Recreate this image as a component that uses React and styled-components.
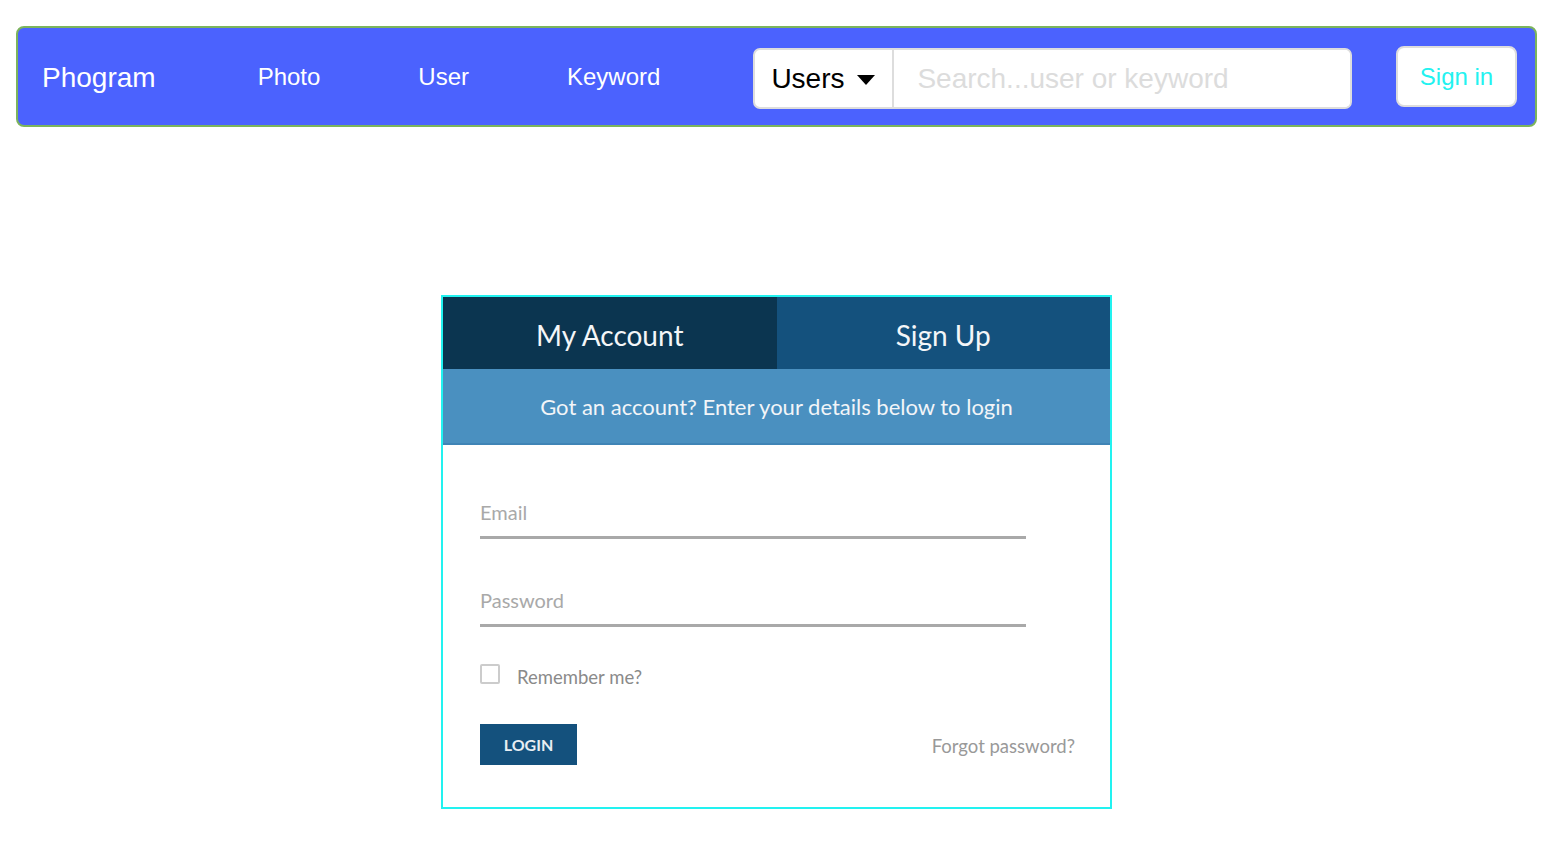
import React, {useState} from 'react';
import styled, {createGlobalStyle} from 'styled-components';

const navBlue = "#4b62fe";
const navBorder = "#7cb45c";
const cyan = "#22f2f0";
const tabDark = "#0b3550";
const tabLight = "#14517d";
const banner = "#4a90c0";
const fieldGrey = "#a9a9a9";

const GlobalStyle = createGlobalStyle`
  body {
    margin: 0;
    background: #ffffff;
    font-family: "Liberation Sans", Arial, sans-serif;
  }
  * {
    box-sizing: border-box;
  }
`;

const Page = styled.div`
  padding: 26px 23px 40px 16px;
`;

const Navbar = styled.nav`
  height: 101px;
  display: flex;
  align-items: center;
  padding: 0 18px 0 24px;
  background-color: ${navBlue};
  border: 2px solid ${navBorder};
  border-radius: 8px;
`;

const Brand = styled.a`
  font-size: 28px;
  color: #ffffff;
  text-decoration: none;
  margin-right: 102px;
  margin-top: 2px;
`;

const NavLinks = styled.div`
  display: flex;
  gap: 98px;
`;

const NavLink = styled.a`
  font-size: 24px;
  color: #ffffff;
  text-decoration: none;
`;

const SearchGroup = styled.div`
  display: flex;
  width: 599px;
  height: 61px;
  margin-left: 93px;
  margin-top: 4px;
  background: #ffffff;
  border: 2px solid #dddddd;
  border-radius: 7px;
  overflow: hidden;
`;

const SelectBox = styled.div`
  width: 139px;
  display: flex;
  align-items: center;
  gap: 12px;
  padding-left: 16px;
  border-right: 2px solid #dddddd;
  font-size: 28px;
  color: #000000;
`;

const Caret = styled.span`
  width: 0;
  height: 0;
  border-left: 9px solid transparent;
  border-right: 9px solid transparent;
  border-top: 10px solid #000000;
  margin-top: 2px;
`;

const SearchInput = styled.input`
  flex: 1;
  border: none;
  outline: none;
  padding: 0 0 0 23px;
  font-family: "Liberation Sans", Arial, sans-serif;
  font-size: 28px;
  color: #333333;
  &::placeholder {
    color: #dcdcdc;
  }
`;

const SignInButton = styled.button`
  width: 121px;
  height: 61px;
  margin-left: auto;
  background: #ffffff;
  border: 2px solid #dddddd;
  border-radius: 8px;
  font-family: "Liberation Sans", Arial, sans-serif;
  font-size: 24px;
  color: ${cyan};
  cursor: pointer;
`;

const Card = styled.div`
  width: 671px;
  margin: 168px auto 0;
  border: 2px solid ${cyan};
  font-family: Lato, "Open Sans", sans-serif;
`;

const Tabs = styled.div`
  display: grid;
  grid-template-columns: 1fr 1fr;
`;

const Tab = styled.button`
  height: 72px;
  padding-top: 5px;
  border: none;
  background-color: ${props => props.active ? tabDark : tabLight};
  color: #f4f6f8;
  font-family: Lato, "Open Sans", sans-serif;
  font-size: 28px;
  cursor: pointer;
`;

const Banner = styled.div`
  height: 76px;
  display: flex;
  align-items: center;
  justify-content: center;
  background-color: ${banner};
  border-bottom: 2px solid #3f84b6;
  color: #f2f5f8;
  font-size: 22px;
`;

const Form = styled.form`
  padding: 53px 35px 42px 37px;
  display: flex;
  flex-direction: column;
`;

const Field = styled.input`
  width: 546px;
  height: 41px;
  padding: 0 0 10px 0;
  border: none;
  border-bottom: 3px solid ${fieldGrey};
  outline: none;
  font-family: Lato, "Open Sans", sans-serif;
  font-size: 20px;
  color: #555555;
  background: transparent;
  margin-bottom: ${props => props.gap}px;
  &::placeholder {
    color: ${fieldGrey};
  }
`;

const CheckRow = styled.label`
  display: flex;
  align-items: center;
  gap: 17px;
  height: 20px;
  font-size: 18.5px;
  color: #8a8a8a;
  margin-bottom: 40px;
  cursor: pointer;
`;

const Checkbox = styled.span`
  width: 20px;
  height: 20px;
  border: 2px solid #cccccc;
  border-radius: 2px;
  background: ${props => props.checked ? tabLight : '#ffffff'};
`;

const CheckText = styled.span`
  margin-top: 5px;
`;

const Actions = styled.div`
  display: flex;
  justify-content: space-between;
  align-items: center;
`;

const LoginButton = styled.button`
  width: 97px;
  height: 41px;
  border: none;
  background-color: ${tabLight};
  color: #e8eef3;
  font-family: Lato, "Open Sans", sans-serif;
  font-size: 16px;
  font-weight: 700;
  cursor: pointer;
`;

const Forgot = styled.a`
  font-size: 18.5px;
  color: #999999;
  text-decoration: none;
  margin-top: 3px;
`;

function App() {
    const [tab, setTab] = useState(0);
    const [remember, setRemember] = useState(false);

    return (
        <Page>
            <GlobalStyle/>
            <Navbar>
                <Brand href="#">Phogram</Brand>
                <NavLinks>
                    <NavLink href="#">Photo</NavLink>
                    <NavLink href="#">User</NavLink>
                    <NavLink href="#">Keyword</NavLink>
                </NavLinks>
                <SearchGroup>
                    <SelectBox>Users <Caret/></SelectBox>
                    <SearchInput placeholder="Search...user or keyword"/>
                </SearchGroup>
                <SignInButton>Sign in</SignInButton>
            </Navbar>

            <Card>
                <Tabs>
                    <Tab active={tab === 0} onClick={() => setTab(0)}>My Account</Tab>
                    <Tab active={tab === 1} onClick={() => setTab(1)}>Sign Up</Tab>
                </Tabs>
                <Banner>Got an account? Enter your details below to login</Banner>
                <Form onSubmit={e => e.preventDefault()}>
                    <Field type="email" placeholder="Email" gap={47}/>
                    <Field type="password" placeholder="Password" gap={37}/>
                    <CheckRow onClick={() => setRemember(!remember)}>
                        <Checkbox checked={remember}/>
                        <CheckText>Remember me?</CheckText>
                    </CheckRow>
                    <Actions>
                        <LoginButton type="submit">LOGIN</LoginButton>
                        <Forgot href="#">Forgot password?</Forgot>
                    </Actions>
                </Form>
            </Card>
        </Page>
    );
}

export default App;
